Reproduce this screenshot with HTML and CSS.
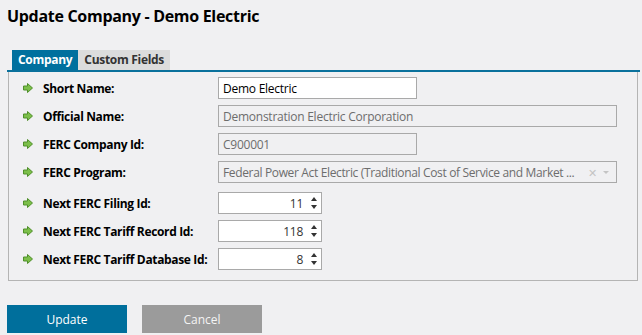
FILE: index.html
```html
<!DOCTYPE html>
<html lang="en">
<head>
<meta charset="UTF-8" />
<title>Update Company - Demo Electric</title>
<link rel="stylesheet" href="styles.css">
</head>
<body>

<h1>Update Company - Demo Electric</h1>

<div class="tabs">
  <span class="tab active">Company</span>
  <span class="tab">Custom Fields</span>
</div>

<div class="panel">
  <div class="row">
    <span class="arrow"><svg width="10" height="10" viewBox="0 0 10 10"><path d="M0.5 3 H4.5 V0.5 L9.5 5 L4.5 9.5 V7 H0.5 Z" fill="#7cbf4a" stroke="#4f8f2a" stroke-width="1"/></svg></span>
    <label>Short Name:</label>
    <input class="field short" type="text" value="Demo Electric" />
  </div>
  <div class="row">
    <span class="arrow"><svg width="10" height="10" viewBox="0 0 10 10"><path d="M0.5 3 H4.5 V0.5 L9.5 5 L4.5 9.5 V7 H0.5 Z" fill="#7cbf4a" stroke="#4f8f2a" stroke-width="1"/></svg></span>
    <label>Official Name:</label>
    <input class="field long" type="text" value="Demonstration Electric Corporation" disabled />
  </div>
  <div class="row">
    <span class="arrow"><svg width="10" height="10" viewBox="0 0 10 10"><path d="M0.5 3 H4.5 V0.5 L9.5 5 L4.5 9.5 V7 H0.5 Z" fill="#7cbf4a" stroke="#4f8f2a" stroke-width="1"/></svg></span>
    <label>FERC Company Id:</label>
    <input class="field short" type="text" value="C900001" disabled />
  </div>
  <div class="row">
    <span class="arrow"><svg width="10" height="10" viewBox="0 0 10 10"><path d="M0.5 3 H4.5 V0.5 L9.5 5 L4.5 9.5 V7 H0.5 Z" fill="#7cbf4a" stroke="#4f8f2a" stroke-width="1"/></svg></span>
    <label>FERC Program:</label>
    <div class="field long select">
      <span class="sel-text">Federal Power Act Electric (Traditional Cost of Service and Market ...</span>
      <span class="sel-x">✕</span>
      <span class="sel-caret"></span>
    </div>
  </div>
  <div class="row first-num">
    <span class="arrow"><svg width="10" height="10" viewBox="0 0 10 10"><path d="M0.5 3 H4.5 V0.5 L9.5 5 L4.5 9.5 V7 H0.5 Z" fill="#7cbf4a" stroke="#4f8f2a" stroke-width="1"/></svg></span>
    <label>Next FERC Filing Id:</label>
    <div class="field num"><span>11</span><span class="spin"><i class="up"></i><i class="down"></i></span></div>
  </div>
  <div class="row">
    <span class="arrow"><svg width="10" height="10" viewBox="0 0 10 10"><path d="M0.5 3 H4.5 V0.5 L9.5 5 L4.5 9.5 V7 H0.5 Z" fill="#7cbf4a" stroke="#4f8f2a" stroke-width="1"/></svg></span>
    <label>Next FERC Tariff Record Id:</label>
    <div class="field num"><span>118</span><span class="spin"><i class="up"></i><i class="down"></i></span></div>
  </div>
  <div class="row">
    <span class="arrow"><svg width="10" height="10" viewBox="0 0 10 10"><path d="M0.5 3 H4.5 V0.5 L9.5 5 L4.5 9.5 V7 H0.5 Z" fill="#7cbf4a" stroke="#4f8f2a" stroke-width="1"/></svg></span>
    <label>Next FERC Tariff Database Id:</label>
    <div class="field num"><span>8</span><span class="spin"><i class="up"></i><i class="down"></i></span></div>
  </div>
</div>

<div class="actions">
  <button class="btn primary">Update</button>
  <button class="btn secondary">Cancel</button>
</div>

</body>
</html>
```

FILE: styles.css
```css
body { background: #f0f0f2; color: #000; font-family: 'Open Sans', 'Noto Sans', sans-serif; font-size: 12px; margin: 0; padding: 0 2px 0 7px; }
h1 { font-size: 16px; font-weight: 700; margin: 0; padding-top: 5px; height: 45px; letter-spacing: -0.3px; }
.tabs { display: flex; padding-left: 5px; height: 20px; border-bottom: 2px solid #0a719c; }
.tab { background: #dcdcdc; color: #333; font-weight: 700; padding: 0 6px; line-height: 20px; letter-spacing: -0.3px; }
.tab.active { background: #00709e; color: #fff; }
.panel { margin: 0 2px 0 1px; border: 1px solid #b4b4b4; border-top: none; height: 209px; padding-top: 2px; box-sizing: border-box; }
.row { display: flex; align-items: center; height: 28px; }
.row.first-num { margin-top: 3px; }
.arrow { width: 10px; height: 10px; margin: 0 10px 0 14px; display: flex; }
.row label { width: 175px; font-weight: 700; letter-spacing: -0.35px; }
.field { height: 22px; box-sizing: border-box; border: 1px solid #a9a9a9; background: #fff; font: inherit; font-size: 12px; padding: 0 4px; color: #000; letter-spacing: -0.25px; }
.field:disabled, .select { background: #f0f0f2; color: #6d6d6d; }
.short { width: 199px; }
.long { width: 399px; }
.select { display: flex; align-items: center; }
.sel-text { flex: 1; white-space: nowrap; overflow: hidden; letter-spacing: -0.35px; }
.sel-x { color: #c4c4c4; font-size: 11px; margin: 0 6px 0 6px; }
.sel-caret { width: 0; height: 0; border-left: 3px solid transparent; border-right: 3px solid transparent; border-top: 3px solid #c4c4c4; margin-right: 3px; }
.num { width: 104px; display: flex; align-items: center; justify-content: flex-end; padding-right: 3px; color: #333; }
.spin { display: flex; flex-direction: column; justify-content: center; gap: 4px; margin-left: 7px; width: 8px; align-items: center; }
.spin i { width: 0; height: 0; border-left: 3.5px solid transparent; border-right: 3.5px solid transparent; }
.spin .up { border-bottom: 4px solid #333; }
.spin .down { border-top: 4px solid #333; }
.actions { display: flex; gap: 15px; margin-top: 24px; }
.btn { width: 120px; height: 28px; border: none; font: inherit; font-size: 12px; color: #fff; }
.primary { background: #006f9c; }
.secondary { background: #9b9b9b; color: #f4f4f4; }
```
